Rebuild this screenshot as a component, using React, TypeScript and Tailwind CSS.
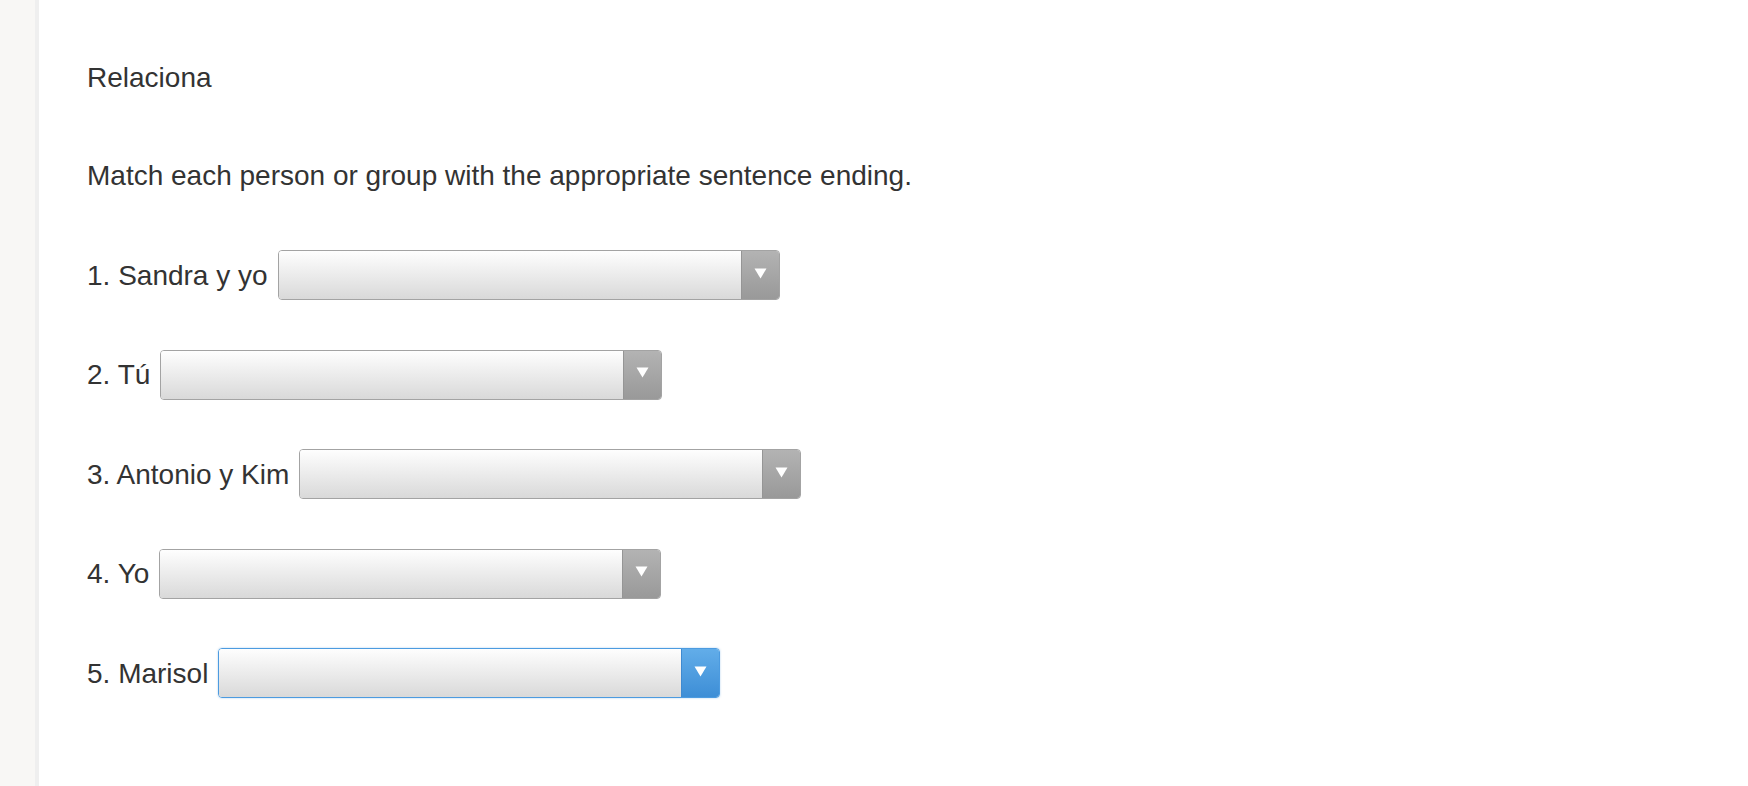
import React from "react";

const rows = [
  { label: "1. Sandra y yo", focused: false },
  { label: "2. Tú", focused: false },
  { label: "3. Antonio y Kim", focused: false },
  { label: "4. Yo", focused: false },
  { label: "5. Marisol", focused: true },
];

function Dropdown({ focused }: { focused: boolean }) {
  return (
    <div
      className={
        "flex h-[50px] w-[502px] overflow-hidden rounded-[4px] border " +
        (focused
          ? "border-[#4c9be0] shadow-[0_0_2px_rgba(76,155,224,0.5)]"
          : "border-[#a3a3a3]")
      }
    >
      <div className="flex-1 bg-gradient-to-b from-[#fefefe] to-[#d9d9d9]" />
      <div
        className={
          "flex w-[38px] items-center justify-center border-l " +
          (focused
            ? "border-[#3f8ad0] bg-gradient-to-b from-[#62ade9] to-[#3d8ed6]"
            : "border-[#959595] bg-gradient-to-b from-[#b3b3b3] to-[#999999]")
        }
      >
        <svg width="13" height="11" viewBox="0 0 13 11" className="-mt-[4px]">
          <path d="M0.5 0.5 H12.5 L6.5 10.5 Z" fill="#ffffff" />
        </svg>
      </div>
    </div>
  );
}

export default function App() {
  return (
    <div
      className="flex min-h-[786px] bg-white text-[#333333]"
      style={{ fontFamily: '"Liberation Sans", Arial, sans-serif' }}
    >
      <div className="w-[39px] shrink-0 border-r-4 border-[#efefef] bg-[#f8f7f5]" />

      <div className="flex-1 pl-[48px] pt-[58px] text-[28px] leading-[39px]">
        <p>Relaciona</p>
        <p className="mt-[59px]">
          Match each person or group with the appropriate sentence ending.
        </p>

        <div className="mt-[55px] flex flex-col gap-[49.5px]">
          {rows.map((row) => (
            <div key={row.label} className="flex items-center gap-[10px]">
              <span>{row.label}</span>
              <Dropdown focused={row.focused} />
            </div>
          ))}
        </div>
      </div>
    </div>
  );
}
